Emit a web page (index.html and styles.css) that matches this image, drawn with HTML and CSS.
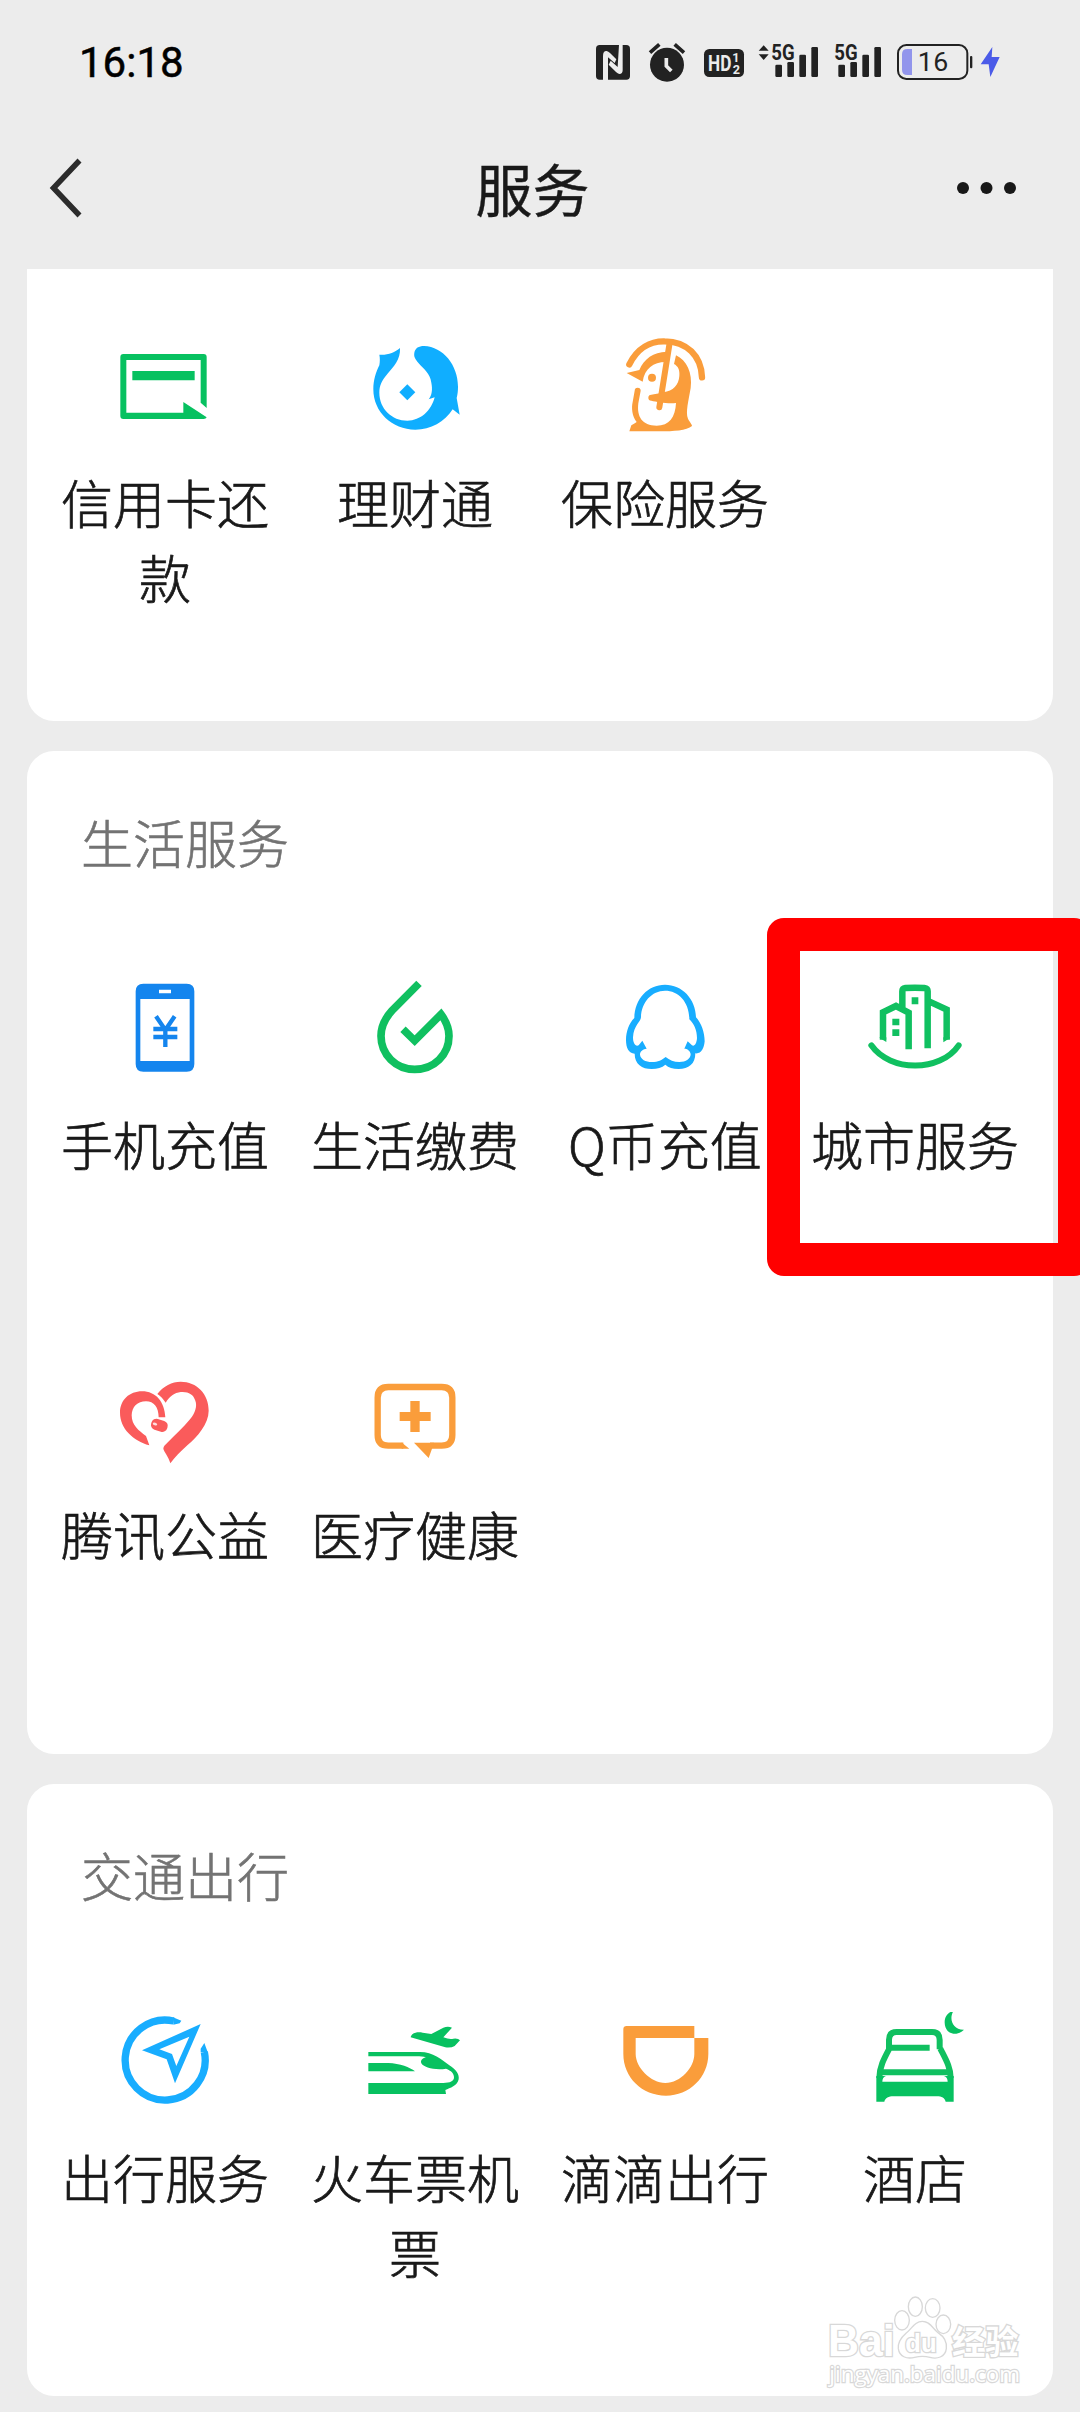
FILE: index.html
```html
<!DOCTYPE html>
<html lang="zh-CN">
<head>
<meta charset="utf-8">
<title>服务</title>
<link rel="stylesheet" href="styles.css">
</head>
<body>
<div class="screen">
  <div class="statusbar">
    <span class="clock">16:18</span>
    <svg class="status-icons" viewBox="0 0 1320 210">
      <g fill="#222">
        <rect x="48" y="45" width="102" height="104" rx="11"/>
        <path fill="#ececec" d="M69 150V78Q69 62 80 63Q85 64 90 69L109 88L104 99L84 82V150ZM117 44H128V121Q128 132 118 132Q113 131 108 126L86 104L92 92L113 111Z"/>
        <circle cx="261" cy="104" r="51"/>
        <path d="M210 68L238 43M284 43L312 68" fill="none" stroke="#222" stroke-width="11"/>
        <path d="M259 84V108L274 123" fill="none" stroke="#ececec" stroke-width="11"/>
        <rect x="372" y="57" width="120" height="84" rx="16"/>
        <path d="M551 46L566 62H536ZM536 73H566L551 90Z"/>
        <rect x="586" y="104" width="20" height="37" rx="4"/><rect x="622" y="96" width="20" height="45" rx="4"/><rect x="658" y="74" width="20" height="67" rx="4"/><rect x="694" y="51" width="20" height="90" rx="4"/>
        <rect x="775" y="104" width="20" height="37" rx="4"/><rect x="811" y="96" width="20" height="45" rx="4"/><rect x="847" y="74" width="20" height="67" rx="4"/><rect x="883" y="51" width="20" height="90" rx="4"/>
        <rect x="1170" y="78" width="7" height="37" rx="3"/>
      </g>
      <rect x="954" y="45" width="208" height="102" rx="25" fill="none" stroke="#222" stroke-width="6"/>
      <path d="M996 57V135H982Q966 135 966 119V73Q966 57 982 57Z" fill="#9295ec"/>
      <path d="M1237 51L1202 103H1226L1231 141L1259 81H1235Z" fill="#4b5be8"/>
      <g class="status-text">
        <text x="384" y="122" font-size="64" textLength="70" lengthAdjust="spacingAndGlyphs" fill="#ececec">HD</text>
        <text x="457" y="96" font-size="38" fill="#ececec">1</text>
        <text x="458" y="131" font-size="38" fill="#ececec">2</text>
        <text x="574" y="91" font-size="64" textLength="70" lengthAdjust="spacingAndGlyphs" fill="#222">5G</text>
        <text x="763" y="91" font-size="64" textLength="70" lengthAdjust="spacingAndGlyphs" fill="#222">5G</text>
        <text class="level" x="1013" y="123" font-size="80" textLength="92" fill="#222">16</text>
      </g>
    </svg>
  </div>

  <header class="navbar">
    <svg class="back" viewBox="0 0 36 64"><path d="M31.500 4.500L5.500 32L31.500 59.500" fill="none" stroke="#2c2c2c" stroke-width="5.500"/></svg>
    <h1>服务</h1>
    <svg class="more" viewBox="0 0 60 12"><g fill="#181818"><circle cx="6" cy="6" r="6"/><circle cx="29.500" cy="6" r="6"/><circle cx="53" cy="6" r="6"/></g></svg>
  </header>

  <main>
    <section class="card card-finance">
      <div class="grid">
        <a class="item">
          <svg viewBox="45 51 300 300" fill="#07c160"><path d="M70 102H311Q320 102 320 111V264L302 248V120H79V278H250V246L320 292Q318 297 311 297H70Q61 297 61 288V111Q61 102 70 102Z"/><path d="M97 153H284V181H97Z"/></svg>
          <span>信用卡还款</span>
        </a>
        <a class="item">
          <svg viewBox="795 51 300 300" fill="#10aeff"><path d="M900 84C902 120 880 140 862 162C845 182 838 198 838 218C838 266 876 302 922 302C962 302 994 272 1004 232L986 238C996 226 998 208 994 188C990 160 972 148 956 130C945 116 941 110 943 98C946 84 956 78 972 78C1030 80 1074 136 1074 200C1074 212 1073 222 1070 234L1079 284L1058 268C1034 306 992 329 946 329C876 329 820 276 820 208C820 180 828 156 838 136C840 124 840 114 838 104C862 106 884 98 900 84Z"/><path d="M922 193L946 217L922 241L898 217Z"/></svg>
          <span>理财通</span>
        </a>
        <a class="item">
          <svg viewBox="225 51 300 300" fill="#fa9d3b"><path d="M268 133C292 84 332 63 374 64C440 64 484 108 486 172" fill="none" stroke="#fa9d3b" stroke-width="19" stroke-linecap="round"/><path d="M389 68L366 212L358 262" fill="none" stroke="#fa9d3b" stroke-width="18" stroke-linecap="round"/><path d="M260 159L298 150C312 116 340 96 380 95L377 126C340 126 314 146 308 185Z"/><path d="M408 106C440 120 458 160 452 204C446 240 436 278 444 296C450 308 456 312 456 318C440 332 400 334 360 334H268L274 316C284 310 290 306 290 306C276 290 274 262 278 246L284 212A9 9 0 0 1 302 212L295 250C290 290 306 317 350 317C388 317 406 292 408 249C384 252 350 246 334 242A9 9 0 0 1 334 224C344 222 356 222 370 217C400 212 416 196 418 168C420 150 414 138 402 132Z"/><circle cx="336" cy="173" r="12"/></svg>
          <span>保险服务</span>
        </a>
      </div>
    </section>

    <section class="card card-life">
      <h2>生活服务</h2>
      <div class="grid">
        <a class="item">
          <svg viewBox="165 537 300 300"><path fill="#1485ee" fill-rule="evenodd" d="M250 551H380Q403 551 403 574V792Q403 815 380 815H250Q227 815 227 792V574Q227 551 250 551ZM241 597V783H389V597ZM297 569V580H333V569Z"/><path d="M288 649L316 690L344 649M280 687H352M280 711H352M316 684V741" fill="none" stroke="#1485ee" stroke-width="13"/></svg>
          <span>手机充值</span>
        </a>
        <a class="item">
          <svg viewBox="915 537 300 300"><path d="M1077 550L996 632C976 654 963 678 963 708C963 764 1008 808 1064 808C1122 808 1167 764 1167 708C1167 684 1157 662 1143 643L1064 722L1029 688" fill="none" stroke="#10c060" stroke-width="23"/></svg>
          <span>生活缴费</span>
        </a>
        <a class="item">
          <svg viewBox="165 237 300 300"><path fill="#18adff" fill-rule="evenodd" d="M315 254C366 254 407 296 408 352C424 370 434 396 434 424C432 446 424 462 406 460C406 492 386 507 356 507C338 507 326 503 316 494C306 503 292 507 275 507C246 507 224 492 224 461C206 460 198 444 198 420C198 394 207 370 223 354C224 296 264 254 315 254ZM315 272C276 272 244 306 243 352C242 366 221 376 219 412C219 430 226 440 236 436L247 422L260 446C246 448 240 456 240 464C242 478 256 486 276 486C294 486 306 480 317 471C328 480 342 486 358 486C378 486 392 476 392 462C390 452 382 446 373 446L383 424L396 436C404 440 410 430 411 414C411 390 402 372 388 358C388 306 356 272 315 272Z"/></svg>
          <span>Q币充值</span>
        </a>
        <a class="item">
          <svg viewBox="915 237 300 300"><g fill="none" stroke="#10c060" stroke-width="19.500"><path d="M969 419V337L1008 318L1046 338V448M1027 330V274Q1027 265 1036 264Q1064 263 1093 264Q1103 265 1103 274V445M1107 304L1160 329V419"/><path d="M934 436C990 516 1140 518 1196 436" stroke-width="18" stroke-linecap="round"/></g><path fill="#10c060" d="M1055 292H1075V313H1055ZM997 356H1018V376H997ZM997 388H1018V408H997ZM959 412V414L979 426V412ZM1150 412V427L1170 414V412Z"/></svg>
          <span>城市服务</span>
        </a>
        <a class="item">
          <svg viewBox="105 87 300 300" fill="#fa5b5b"><path d="M232 162C250 138 276 125 302 125C350 125 387 162 386 212C386 252 352 290 322 316C302 334 286 350 271 370C266 350 252 336 250 326C250 318 256 314 262 308C286 284 310 262 330 238C346 218 352 198 346 182C340 162 324 154 302 156C284 158 268 170 257 188C250 178 242 168 232 162Z"/><path d="M208 316C160 302 120 266 120 218C120 180 148 154 186 154C228 154 254 186 256 232L236 232C236 202 222 184 198 184C172 184 156 200 155 226C155 256 176 272 198 288Z"/><rect x="213" y="239" width="50" height="34" rx="15" transform="rotate(17 238 256)"/><ellipse cx="225" cy="252" rx="7" ry="4" fill="#fff" opacity=".8" transform="rotate(20 225 252)"/></svg>
          <span>腾讯公益</span>
        </a>
        <a class="item">
          <svg viewBox="855 87 300 300" fill="#fa9d3b"><path d="M970 317H925Q893 317 893 285V173Q893 141 925 141H1085Q1117 141 1117 173V285Q1117 317 1085 317H1050" fill="none" stroke="#fa9d3b" stroke-width="19"/><path d="M965 307.500L988 326.500H965ZM1002 308H1062L1056 326L1046 354ZM991 183H1019V216H1052V243H1019V276H991V243H959V216H991Z"/></svg>
          <span>医疗健康</span>
        </a>
      </div>
    </section>

    <section class="card card-travel">
      <h2>交通出行</h2>
      <div class="grid">
        <a class="item">
          <svg viewBox="105 96 300 300" fill="#18adff"><path d="M281 123A120 120 0 1 0 373 216" fill="none" stroke="#18adff" stroke-width="22"/><path d="M279 112L304 122L299 130L280 134ZM362 217V206L373 189L383 216Z"/><path fill-rule="evenodd" d="M362 132L186 211L260 238L285 310ZM328 170L238 208L276 222L289 258Z"/></svg>
          <span>出行服务</span>
        </a>
        <a class="item">
          <svg viewBox="855 96 300 300" fill="#07c160"><path d="M865 216H1020C1060 216 1084 238 1108 256C1130 270 1138 284 1136 298C1132 318 1110 324 1096 330L1098 342H865V309H1090C1110 309 1122 304 1122 292C1122 280 1114 272 1098 266C1066 272 1030 262 1024 250C1020 240 1030 234 1038 232C1030 230 1020 229 1010 229H865Z"/><path d="M865 249H925C960 250 990 262 1005 274H865ZM992 172C994 160 1010 154 1028 158L1054 162L1090 143Q1104 138 1116 143L1090 172Q1110 180 1120 176Q1134 174 1140 181L1124 198Q1114 204 1096 202Z"/></svg>
          <span>火车票机票</span>
        </a>
        <a class="item">
          <svg viewBox="165 96 300 300"><path fill="#fa9d3b" fill-rule="evenodd" d="M200 138H403V174H445V222C445 292 388 347 318 347C246 347 190 292 190 222V148Q190 138 200 138ZM227 174V222C227 262 272 309 316 309C362 309 403 262 403 222V174Z"/></svg>
          <span>滴滴出行</span>
        </a>
        <a class="item">
          <svg viewBox="915 96 300 300"><g fill="none" stroke="#10c060" stroke-width="18"><path d="M987 208V180Q987 156 1010 156H1116Q1139 156 1139 180V208M985 203H1109M988 206C972 236 958 262 958 294M1141 206C1156 236 1172 262 1172 294M962 277H1168"/></g><path fill="#07c160" d="M949 288H978Q967 292 967 305H1163Q1163 292 1152 288H1181V365H1157C1154 354 1146 349 1130 349H1000C986 349 976 354 973 365H949ZM1181 92C1166 114 1176 150 1212 149C1190 172 1153 162 1154 126C1154 108 1166 96 1181 92Z"/></svg>
          <span>酒店</span>
        </a>
      </div>
    </section>
  </main>

  <div class="highlight"></div>

  <svg class="watermark" viewBox="0 0 900 426">
    <g fill="#fff" stroke="#d8d8d8" stroke-width="4">
      <ellipse cx="366" cy="151" rx="22" ry="29"/><ellipse cx="406" cy="110" rx="21" ry="29"/><ellipse cx="458" cy="114" rx="22" ry="28"/><ellipse cx="490" cy="163" rx="22" ry="28"/>
      <path d="M427 154C450 154 458 176 474 188C492 200 502 214 499 236C496 262 470 268 450 262Q427 256 404 262C380 268 358 260 355 236C353 216 362 204 378 190C396 176 404 154 427 154Z"/>
      <g class="wm-bold" paint-order="stroke">
        <text x="144" y="258" font-size="132" textLength="200" lengthAdjust="spacingAndGlyphs" stroke-width="8">Bai</text>
        <text x="376" y="246" font-size="78" textLength="94" lengthAdjust="spacingAndGlyphs" stroke-width="8">du</text>
        <text x="516" y="252" font-size="100" textLength="200" stroke-width="8">经验</text>
      </g>
      <text class="wm-url" x="148" y="337" font-size="64" textLength="572" lengthAdjust="spacingAndGlyphs" paint-order="stroke" stroke-width="7">jingyan.baidu.com</text>
    </g>
  </svg>
</div>
</body>
</html>
```
FILE: styles.css
```css
* { box-sizing: border-box; }

body {
  margin: 0;
  background: #ececec;
  color: #191919;
  font-family: "Noto Sans CJK SC", sans-serif;
}

.screen {
  position: relative;
  width: 1080px;
  height: 2412px;
  overflow: hidden;
}

.statusbar {
  display: flex;
  justify-content: space-between;
  height: 107px;
  padding: 30px 60px 0 79px;
}

.clock {
  font: 400 42px/66px Roboto, sans-serif;
  color: #000;
  -webkit-text-stroke: 0.5px #000;
}

.status-icons {
  width: 440px;
  height: 70px;
}

.status-text {
  font-family: Roboto, sans-serif;
  font-weight: 700;
}

.status-text .level { font-weight: 400; }

.navbar {
  display: grid;
  grid-template-columns: 1fr auto 1fr;
  align-items: center;
  height: 162px;
  padding: 0 63px 0 48px;
}

.back { width: 36px; height: 64px; }
.more { width: 60px; height: 12px; justify-self: end; }

.navbar h1 {
  margin: 0 0 2px;
  font-size: 57px;
  font-weight: 400;
  line-height: 80px;
  -webkit-text-stroke: 0.4px #191919;
}

main {
  display: flex;
  flex-direction: column;
  gap: 30px;
  padding: 0 27px;
}

.card {
  border-radius: 27px;
  background: #fff;
}

.card-finance {
  height: 452px;
  padding-top: 68px;
  border-radius: 0 0 27px 27px;
}

.card-life { height: 1003px; padding-top: 53px; }
.card-travel { height: 612px; padding-top: 53px; }

.card h2 {
  margin: 0 0 100px;
  padding-left: 54px;
  color: #737373;
  font-size: 52px;
  font-weight: 300;
  line-height: 75px;
  -webkit-text-stroke: 0.6px #737373;
}

.grid {
  display: grid;
  grid-template-columns: repeat(4, 250px);
  grid-auto-rows: 390px;
  padding-left: 13px;
}

.item {
  display: flex;
  flex-direction: column;
  align-items: center;
  gap: 27px;
}

.item svg { width: 100px; height: 100px; }

.item span {
  font-size: 52px;
  font-weight: 300;
  line-height: 75px;
  text-align: center;
  -webkit-text-stroke: 0.7px #191919;
}

.highlight {
  position: absolute;
  left: 767px;
  top: 918px;
  width: 324px;
  height: 358px;
  border: 33px solid #f00;
  border-radius: 17px;
}

.watermark {
  position: absolute;
  left: 780px;
  top: 2270px;
  width: 300px;
  height: 142px;
}

.wm-bold {
  font-family: "Liberation Sans", "Noto Sans CJK SC", sans-serif;
  font-weight: 700;
}

.wm-url { font-family: "Open Sans", sans-serif; }
```
